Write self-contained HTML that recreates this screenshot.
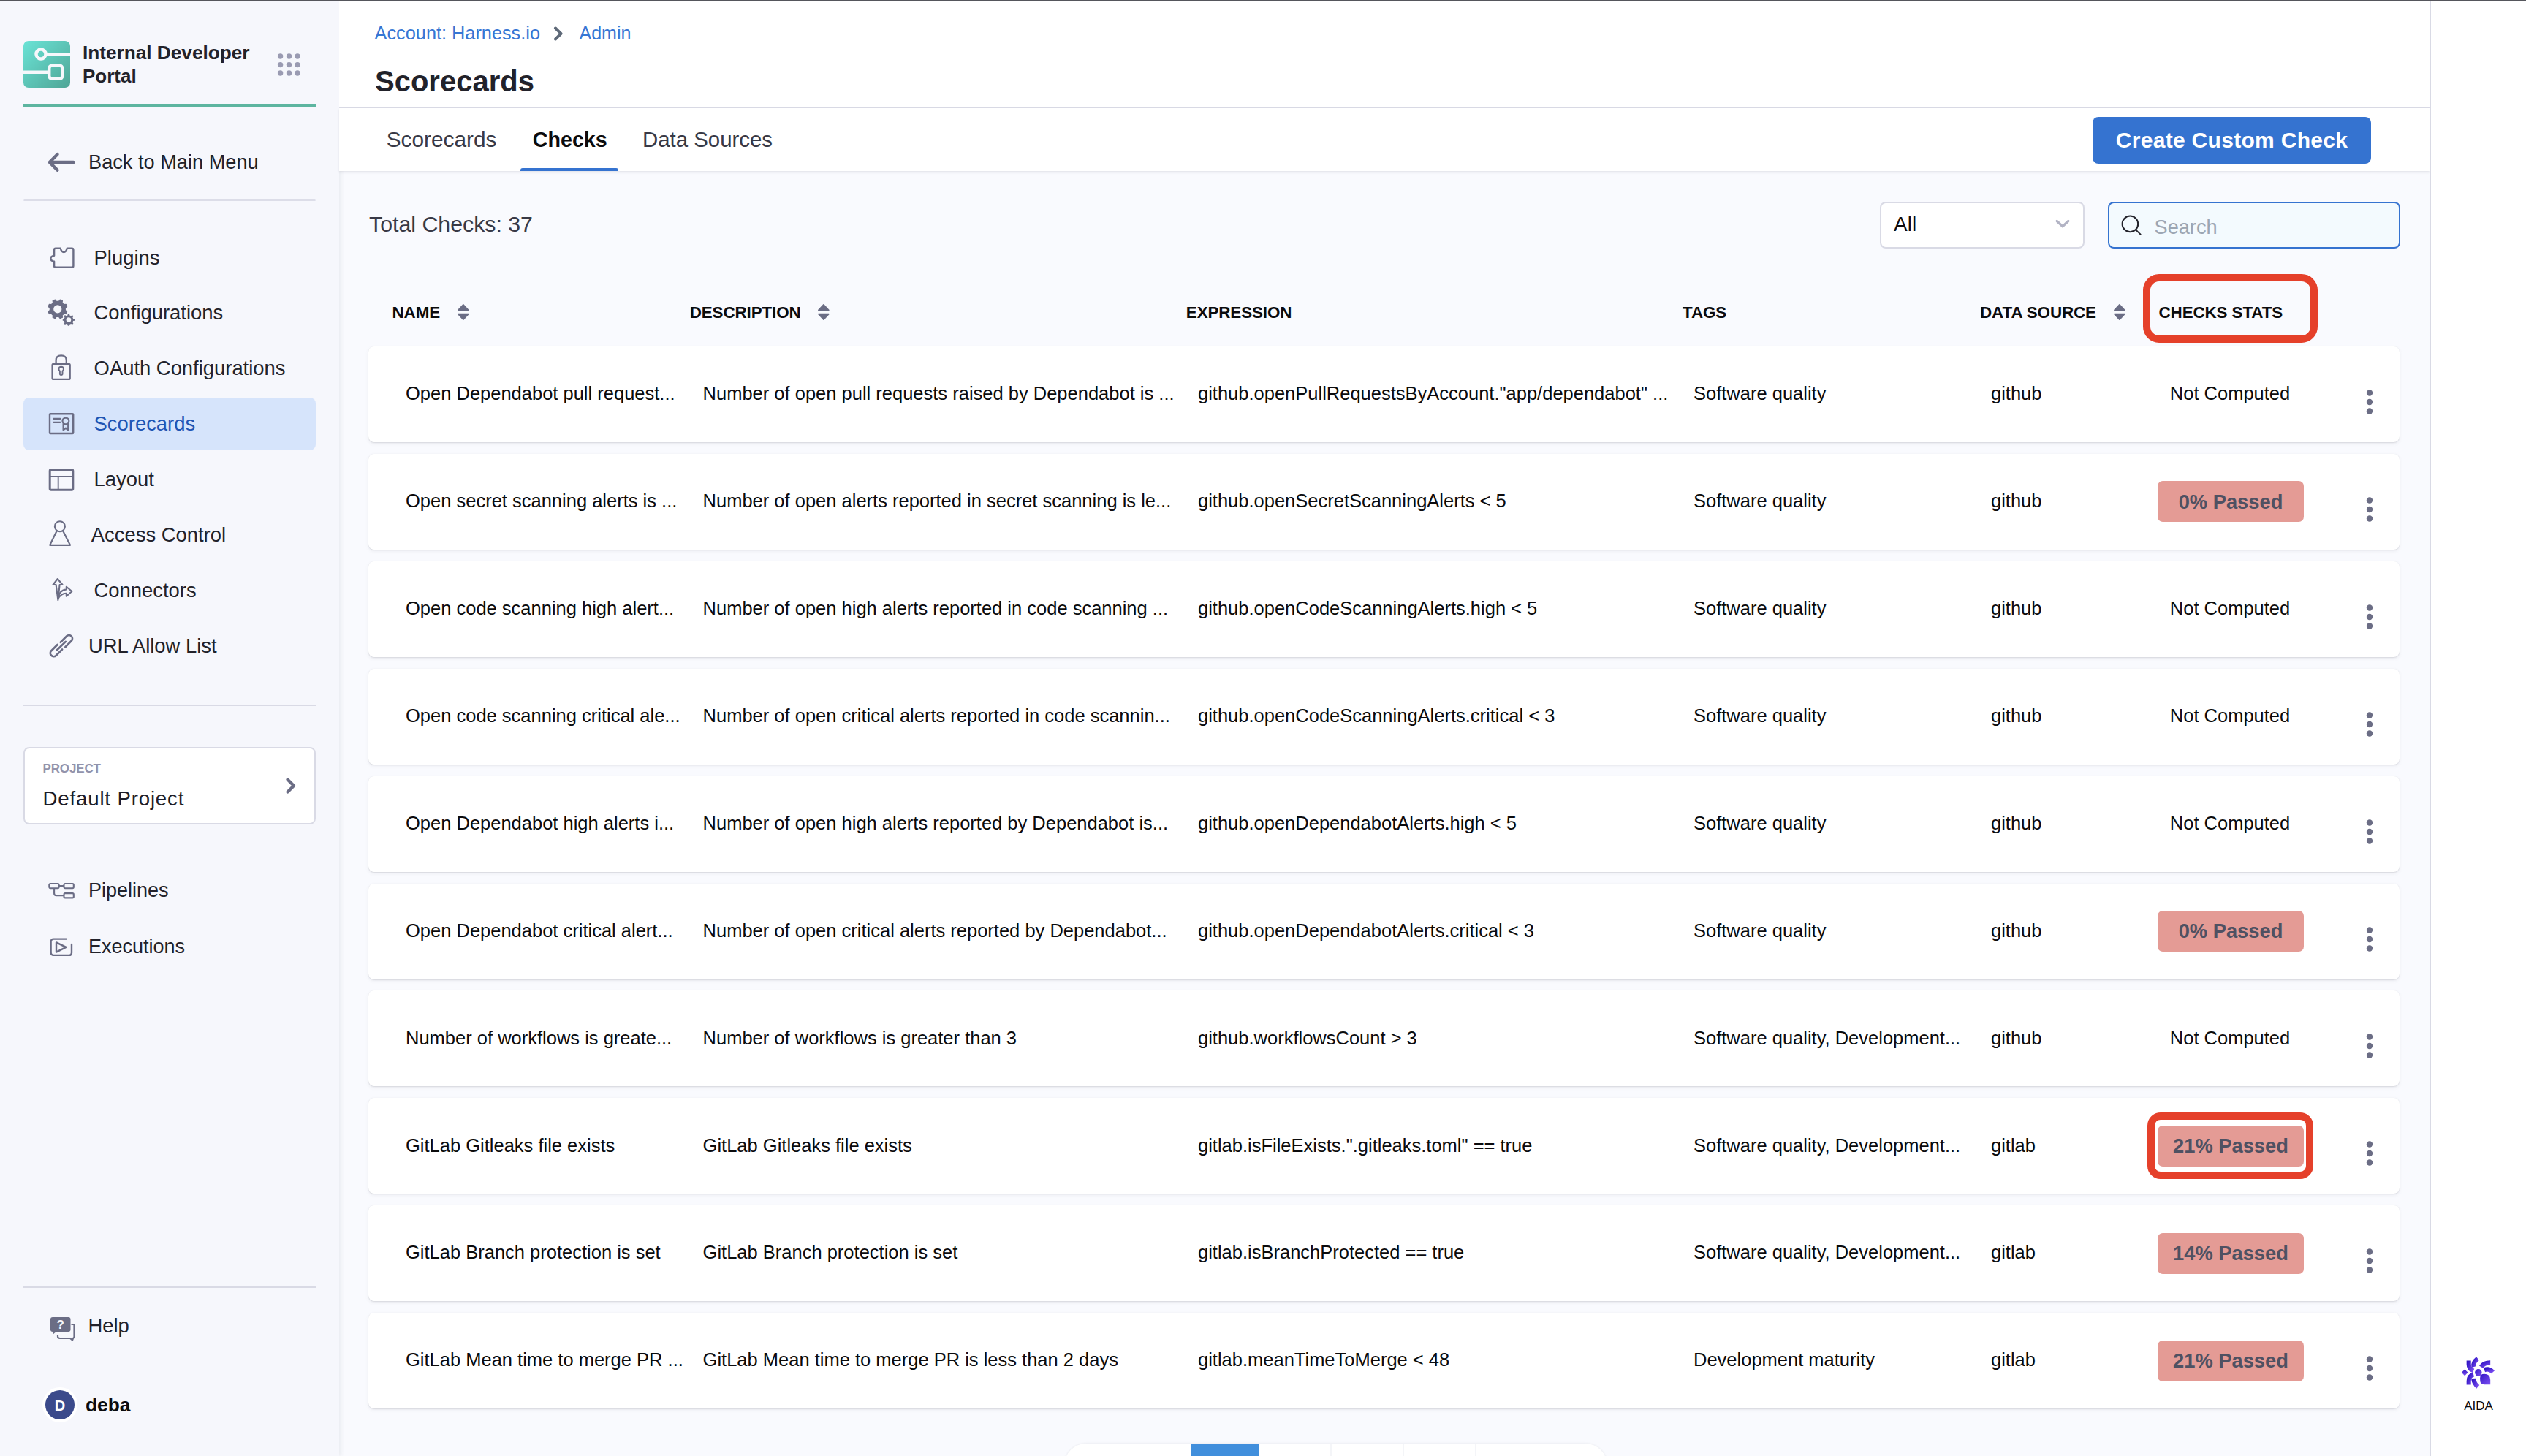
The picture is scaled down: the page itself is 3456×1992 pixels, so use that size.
<!DOCTYPE html>
<html><head><meta charset="utf-8"><title>Scorecards - Checks</title><style>
*{margin:0;padding:0;box-sizing:border-box}
html,body{width:3456px;height:1992px;overflow:hidden;background:#F9FAFE;font-family:"Liberation Sans",sans-serif}
.t{position:absolute;white-space:nowrap}
.abs{position:absolute}
svg{position:absolute;overflow:visible}
</style></head>
<body>
<div class="abs" style="left:0;top:0;width:3456px;height:2px;background:#55565C;z-index:50"></div><div class="abs" style="left:0;top:0;width:464px;height:1992px;background:#F6F7FC;box-shadow:3px 0 5px rgba(60,65,90,0.07)"></div><svg style="left:32px;top:56px" width="64" height="64" viewBox="0 0 64 64">
<defs><linearGradient id="lg" x1="0" y1="0" x2="1" y2="1"><stop offset="0" stop-color="#6AE3D6"/><stop offset="1" stop-color="#4FA596"/></linearGradient></defs>
<rect x="0" y="0" width="64" height="64" rx="7" fill="url(#lg)"/>
<rect x="30" y="16" width="34" height="4.5" fill="#F6F7FB"/>
<circle cx="24" cy="18" r="6.5" fill="none" stroke="#F6F7FB" stroke-width="4.5"/>
<rect x="0" y="40.5" width="34" height="4.5" fill="#F6F7FB"/>
<rect x="35.2" y="33.6" width="18.2" height="18.2" rx="4" fill="none" stroke="#F6F7FB" stroke-width="4.5"/>
</svg><div class="t" style="left:113px;top:58.8px;font-size:26.2px;line-height:26.2px;color:#22222A;font-weight:700;">Internal Developer</div>
<div class="t" style="left:113px;top:91.0px;font-size:26px;line-height:26px;color:#22222A;font-weight:700;">Portal</div>
<svg style="left:376px;top:70px" width="40" height="40"><circle cx="7.600000000000023" cy="7" r="3.7" fill="#9A9BB2"/><circle cx="19.5" cy="7" r="3.7" fill="#9A9BB2"/><circle cx="31" cy="7" r="3.7" fill="#9A9BB2"/><circle cx="7.600000000000023" cy="18.599999999999994" r="3.7" fill="#9A9BB2"/><circle cx="19.5" cy="18.599999999999994" r="3.7" fill="#9A9BB2"/><circle cx="31" cy="18.599999999999994" r="3.7" fill="#9A9BB2"/><circle cx="7.600000000000023" cy="30" r="3.7" fill="#9A9BB2"/><circle cx="19.5" cy="30" r="3.7" fill="#9A9BB2"/><circle cx="31" cy="30" r="3.7" fill="#9A9BB2"/></svg><div class="abs" style="left:32px;top:142px;width:400px;height:4px;background:#5DB5A0"></div><svg style="left:64px;top:206px" width="40" height="32" viewBox="0 0 40 32">
<path d="M36.5 16 H4.5 M14.5 5.2 L3.8 16 L14.5 26.8" fill="none" stroke="#6B6D85" stroke-width="4.4" stroke-linecap="round" stroke-linejoin="round"/></svg><div class="t" style="left:121px;top:208.0px;font-size:27.2px;line-height:27.2px;color:#22222A;font-weight:400;">Back to Main Menu</div>
<div class="abs" style="left:32px;top:272px;width:400px;height:3px;border-radius:2px;background:#DCDDE8"></div><div class="abs" style="left:32px;top:544px;width:400px;height:72px;border-radius:8px;background:#D6E4FB"></div><svg style="left:66px;top:336px" width="40" height="34" viewBox="0 0 40 34"><path d="M10 3.8 H16.8 Q18 9 21.25 9 Q24.5 9 25.7 3.8 H32.4 Q34.4 3.8 34.4 5.8 V27.7 Q34.4 29.7 32.4 29.7 H10 Q8.1 29.7 8.1 27.7 V21.7 Q3.4 21 3.4 17.7 Q3.4 14.4 8.1 13.7 V5.8 Q8.1 3.8 10 3.8 Z" fill="none" stroke="#6B6D85" stroke-width="2.4" stroke-linejoin="round"/></svg><div class="t" style="left:128.6px;top:338.6px;font-size:27.4px;line-height:27.4px;color:#22222A;font-weight:400;">Plugins</div>
<svg style="left:64px;top:408px" width="42" height="42" viewBox="0 0 42 42"><polygon points="25.27,16.56 27.56,18.28 26.21,21.53 23.38,21.13 21.03,23.48 21.43,26.31 18.18,27.66 16.46,25.37 13.14,25.37 11.42,27.66 8.17,26.31 8.57,23.48 6.22,21.13 3.39,21.53 2.04,18.28 4.33,16.56 4.33,13.24 2.04,11.52 3.39,8.27 6.22,8.67 8.57,6.32 8.17,3.49 11.42,2.14 13.14,4.43 16.46,4.43 18.18,2.14 21.43,3.49 21.03,6.32 23.38,8.67 26.21,8.27 27.56,11.52 25.27,13.24" fill="#6B6D85" stroke="#6B6D85" stroke-width="1.2" stroke-linejoin="round"/><circle cx="14.8" cy="14.9" r="5.6" fill="#F6F7FB"/><polygon points="36.12,28.11 38.03,28.51 38.03,30.69 36.12,31.09 35.36,32.94 36.42,34.57 34.87,36.12 33.24,35.06 31.39,35.82 30.99,37.73 28.81,37.73 28.41,35.82 26.56,35.06 24.93,36.12 23.38,34.57 24.44,32.94 23.68,31.09 21.77,30.69 21.77,28.51 23.68,28.11 24.44,26.26 23.38,24.63 24.93,23.08 26.56,24.14 28.41,23.38 28.81,21.47 30.99,21.47 31.39,23.38 33.24,24.14 34.87,23.08 36.42,24.63 35.36,26.26" fill="#6B6D85" stroke="#F6F7FB" stroke-width="2.6" stroke-linejoin="round" paint-order="stroke"/><circle cx="29.9" cy="29.6" r="3.3" fill="#F6F7FB"/></svg><div class="t" style="left:128.6px;top:414.4px;font-size:27.4px;line-height:27.4px;color:#22222A;font-weight:400;">Configurations</div>
<svg style="left:68px;top:483px" width="32" height="38" viewBox="0 0 32 38"><path d="M8.6 15 V10 Q8.6 3.4 15.7 3.4 Q22.8 3.4 22.8 10 V15" fill="none" stroke="#6B6D85" stroke-width="2.3"/><rect x="3.6" y="15" width="24.1" height="20.9" rx="1.5" fill="none" stroke="#6B6D85" stroke-width="2.3"/><path d="M15.7 18.8 Q18.9 18.8 18.9 22 Q18.9 23.6 17.5 24.6 V28.6 Q17.5 30 15.7 30 Q13.9 30 13.9 28.6 V24.6 Q12.5 23.6 12.5 22 Q12.5 18.8 15.7 18.8Z" fill="none" stroke="#6B6D85" stroke-width="1.9"/></svg><div class="t" style="left:128.6px;top:489.8px;font-size:27.4px;line-height:27.4px;color:#22222A;font-weight:400;">OAuth Configurations</div>
<svg style="left:65px;top:563px" width="38" height="34" viewBox="0 0 38 34"><rect x="3" y="3.2" width="32.2" height="26.8" rx="1" fill="none" stroke="#6B6D85" stroke-width="2.4"/><path d="M8.4 9.9 H17.3 M8.4 14.8 H17.3" stroke="#6B6D85" stroke-width="2.2" stroke-linecap="round"/><circle cx="24.9" cy="13" r="4.4" fill="none" stroke="#6B6D85" stroke-width="2.2"/><path d="M21.6 16.5 V25.3 L24.9 22.6 L28.2 25.3 V16.5" fill="none" stroke="#6B6D85" stroke-width="2.2" stroke-linejoin="round"/></svg><div class="t" style="left:128.6px;top:566.4px;font-size:27.4px;line-height:27.4px;color:#1F55B4;font-weight:400;">Scorecards</div>
<svg style="left:64px;top:639px" width="40" height="34" viewBox="0 0 40 34"><rect x="4.2" y="3.6" width="31.6" height="27.6" rx="1.8" fill="none" stroke="#6B6D85" stroke-width="3"/><path d="M4 13 H36 M15.7 13 V31" stroke="#6B6D85" stroke-width="1.9"/></svg><div class="t" style="left:128.6px;top:642.2px;font-size:27.4px;line-height:27.4px;color:#22222A;font-weight:400;">Layout</div>
<svg style="left:65px;top:710px" width="36" height="40" viewBox="0 0 36 40"><circle cx="16.9" cy="10.2" r="7" fill="none" stroke="#6B6D85" stroke-width="2.1"/><path d="M12.6 16.5 L3.2 35.8 H31 L21.2 16.5" fill="none" stroke="#6B6D85" stroke-width="2.2" stroke-linejoin="round"/></svg><div class="t" style="left:124.8px;top:718.4px;font-size:27.4px;line-height:27.4px;color:#22222A;font-weight:400;">Access Control</div>
<svg style="left:66px;top:788px" width="36" height="38" viewBox="0 0 36 38"><path d="M12.8 4 L19.5 12 H15.6 L13.4 33 L10.6 12 H6.5 Z" fill="none" stroke="#6B6D85" stroke-width="2.1" stroke-linejoin="round"/><path d="M24.8 14.8 L32.4 21 L24.8 27.7 V23.8 Q18 23.5 13.6 31 Q15 19 24.8 18.5 Z" fill="none" stroke="#6B6D85" stroke-width="2.1" stroke-linejoin="round"/></svg><div class="t" style="left:128.6px;top:794.3px;font-size:27.4px;line-height:27.4px;color:#22222A;font-weight:400;">Connectors</div>
<svg style="left:66px;top:866px" width="36" height="36" viewBox="0 0 36 36"><g fill="none" stroke="#6B6D85" stroke-width="2.7" stroke-linecap="round"><path d="M16.8 12.7 L25.25 4.25 A4.6 4.6 0 0 1 31.75 10.75 L23.3 19.2"/><path d="M19.05 22.45 L10.55 30.95 A4.6 4.6 0 0 1 4.05 24.45 L12.55 15.95"/><path d="M12 23.3 L23.8 11.9"/></g></svg><div class="t" style="left:121px;top:870.1px;font-size:27.4px;line-height:27.4px;color:#22222A;font-weight:400;">URL Allow List</div>
<div class="abs" style="left:32px;top:964px;width:400px;height:2px;background:#D9DAE5"></div><div class="abs" style="left:32px;top:1022px;width:400px;height:106px;border-radius:8px;background:#fff;border:2px solid #D9DAE5"></div><div class="t" style="left:58.5px;top:1043.0px;font-size:17px;line-height:17px;color:#9293AB;font-weight:700;letter-spacing:-0.15px;">PROJECT</div>
<div class="t" style="left:58.5px;top:1078.9px;font-size:27.6px;line-height:27.6px;color:#1C1C28;font-weight:400;letter-spacing:0.85px;">Default Project</div>
<svg style="left:388px;top:1062px" width="20" height="26" viewBox="0 0 20 26"><path d="M5.5 4.5 L14 13 L5.5 21.5" fill="none" stroke="#6B6D85" stroke-width="4.3" stroke-linecap="round" stroke-linejoin="round"/></svg><svg style="left:64px;top:1205px" width="40" height="28" viewBox="0 0 40 28"><g fill="none" stroke="#6B6D85" stroke-width="2.1"><rect x="3.3" y="4" width="13.3" height="6.2" rx="1.6"/><rect x="23.5" y="4" width="13.3" height="6.2" rx="1.6"/><rect x="23.5" y="17.1" width="13.3" height="6.3" rx="1.6"/><path d="M16.6 7.1 H23.5 M10.1 10.2 V17.3 Q10.1 20.3 13.1 20.3 H23.5"/></g></svg><div class="t" style="left:121px;top:1205.1px;font-size:27px;line-height:27px;color:#22222A;font-weight:400;">Pipelines</div>
<svg style="left:67px;top:1281px" width="34" height="30" viewBox="0 0 34 30"><g fill="none" stroke="#6B6D85" stroke-width="2.4" stroke-linecap="round" stroke-linejoin="round"><path d="M23.6 3.6 H6.6 Q2.6 3.6 2.6 7.6 V22 Q2.6 25.9 6.6 25.9 H27.5 Q31 25.9 31 22.4 V11"/><path d="M10 8.4 L23.4 14.9 L10 21.6 Z"/></g></svg><div class="t" style="left:121px;top:1281.9px;font-size:27px;line-height:27px;color:#22222A;font-weight:400;">Executions</div>
<div class="abs" style="left:32px;top:1760px;width:400px;height:2px;background:#D9DAE5"></div><svg style="left:67px;top:1800px" width="40" height="38" viewBox="0 0 40 38"><rect x="2" y="2" width="27.5" height="20" rx="3" fill="#6B6D85"/><path d="M5 21 L5 26 L11 21 Z" fill="#6B6D85"/><path d="M30.5 12 H34.5 V29.5 L33 31 L32 33.5 L29 31 H15 Q12 31 12 28.5 V26.5" fill="none" stroke="#6B6D85" stroke-width="2.2" stroke-linejoin="round"/><text x="15.7" y="18" font-family="Liberation Sans" font-weight="700" font-size="17" fill="#F6F7FB" text-anchor="middle">?</text></svg><div class="t" style="left:120.4px;top:1800.2px;font-size:27.4px;line-height:27.4px;color:#22222A;font-weight:400;">Help</div>
<div class="abs" style="left:58px;top:1898px;width:48px;height:48px;border-radius:50%;background:#fff"></div><div class="abs" style="left:62px;top:1902px;width:40px;height:40px;border-radius:50%;background:#3B4A8B"></div><div class="t" style="left:82px;transform:translateX(-50%);top:1913.1px;font-size:20px;line-height:20px;color:#fff;font-weight:700;">D</div>
<div class="t" style="left:117px;top:1908.7px;font-size:26.3px;line-height:26.3px;color:#0B0B0D;font-weight:700;">deba</div>
<div class="abs" style="left:464px;top:2px;width:2860px;height:146px;background:#fff;border-bottom:2px solid #D9DAE5"></div><div class="abs" style="left:464px;top:148px;width:2860px;height:86px;background:#fff;box-shadow:0 2px 3px rgba(40,41,61,0.10)"></div><div class="t" style="left:512.6px;top:32.6px;font-size:25.3px;line-height:25.3px;color:#3676D4;font-weight:400;">Account: Harness.io</div>
<svg style="left:755px;top:34px" width="20" height="24" viewBox="0 0 20 24"><path d="M5 4.5 L12.5 12 L5 19.5" fill="none" stroke="#5E6978" stroke-width="4" stroke-linecap="round" stroke-linejoin="round"/></svg><div class="t" style="left:792.5px;top:32.8px;font-size:25px;line-height:25px;color:#3676D4;font-weight:400;">Admin</div>
<div class="t" style="left:513px;top:90.8px;font-size:40px;line-height:40px;color:#22222A;font-weight:700;">Scorecards</div>
<div class="t" style="left:528.7px;top:175.8px;font-size:29.8px;line-height:29.8px;color:#383946;font-weight:400;">Scorecards</div>
<div class="t" style="left:728.7px;top:176.7px;font-size:28.7px;line-height:28.7px;color:#0B0B0D;font-weight:700;">Checks</div>
<div class="t" style="left:879px;top:176.1px;font-size:29.4px;line-height:29.4px;color:#383946;font-weight:400;">Data Sources</div>
<div class="abs" style="left:711.5px;top:230px;width:134px;height:4px;border-radius:3px 3px 0 0;background:#3573D0"></div><div class="abs" style="left:2863px;top:160px;width:381px;height:64px;border-radius:8px;background:#3573D0"></div><div class="t" style="left:3053.5px;transform:translateX(-50%);top:177.1px;font-size:30px;line-height:30px;color:#fff;font-weight:700;letter-spacing:0.3px;">Create Custom Check</div>
<div class="abs" style="left:3324px;top:2px;width:132px;height:1990px;background:#fff;border-left:2px solid #D9DAE5"></div><div class="t" style="left:505px;top:292.4px;font-size:30.3px;line-height:30.3px;color:#383946;font-weight:400;">Total Checks: 37</div>
<div class="abs" style="left:2572px;top:276px;width:280px;height:64px;border-radius:8px;background:#fff;border:2px solid #D9DAE5"></div><div class="t" style="left:2591px;top:293.3px;font-size:28px;line-height:28px;color:#0B0B0D;font-weight:400;">All</div>
<svg style="left:2810px;top:298px" width="24" height="16" viewBox="0 0 24 16"><path d="M4.2 4.5 L12 11.8 L19.8 4.5" fill="none" stroke="#B2B3C4" stroke-width="3.3" stroke-linecap="round" stroke-linejoin="round"/></svg><div class="abs" style="left:2884px;top:276px;width:400px;height:64px;border-radius:8px;background:#F3FAFE;border:2.5px solid #3573D0"></div><svg style="left:2900px;top:292px" width="32" height="32" viewBox="0 0 32 32"><circle cx="14.4" cy="14.4" r="10.8" fill="none" stroke="#22222A" stroke-width="2"/><path d="M22.4 22.6 L28.6 28.6" stroke="#22222A" stroke-width="2" stroke-linecap="round"/></svg><div class="t" style="left:2947.5px;top:296.5px;font-size:27.2px;line-height:27.2px;color:#9CA6B3;font-weight:400;">Search</div>
<div class="t" style="left:536.5px;top:416.8px;font-size:22.4px;line-height:22.4px;color:#0B0B0D;font-weight:700;letter-spacing:-0.1px;">NAME</div>
<svg style="left:624px;top:414px" width="18" height="26" viewBox="0 0 18 26"><path d="M2.9 10.4 L9.85 2.9 L16.8 10.4 Z M2.9 15.6 L9.85 23.1 L16.8 15.6 Z" fill="#6B6D85" stroke="#6B6D85" stroke-width="1.7" stroke-linejoin="round"/></svg><div class="t" style="left:943.7px;top:416.8px;font-size:22.4px;line-height:22.4px;color:#0B0B0D;font-weight:700;letter-spacing:-0.1px;">DESCRIPTION</div>
<svg style="left:1117px;top:414px" width="18" height="26" viewBox="0 0 18 26"><path d="M2.9 10.4 L9.85 2.9 L16.8 10.4 Z M2.9 15.6 L9.85 23.1 L16.8 15.6 Z" fill="#6B6D85" stroke="#6B6D85" stroke-width="1.7" stroke-linejoin="round"/></svg><div class="t" style="left:1622.8px;top:416.8px;font-size:22.4px;line-height:22.4px;color:#0B0B0D;font-weight:700;letter-spacing:-0.1px;">EXPRESSION</div>
<div class="t" style="left:2302px;top:416.8px;font-size:22.4px;line-height:22.4px;color:#0B0B0D;font-weight:700;letter-spacing:-0.1px;">TAGS</div>
<div class="t" style="left:2709px;top:416.8px;font-size:22.4px;line-height:22.4px;color:#0B0B0D;font-weight:700;letter-spacing:-0.1px;">DATA SOURCE</div>
<svg style="left:2889.7px;top:414px" width="18" height="26" viewBox="0 0 18 26"><path d="M2.9 10.4 L9.85 2.9 L16.8 10.4 Z M2.9 15.6 L9.85 23.1 L16.8 15.6 Z" fill="#6B6D85" stroke="#6B6D85" stroke-width="1.7" stroke-linejoin="round"/></svg><div class="t" style="left:2953.5px;top:416.8px;font-size:22.4px;line-height:22.4px;color:#0B0B0D;font-weight:700;letter-spacing:-0.1px;">CHECKS STATS</div>
<div class="abs" style="left:2932px;top:375px;width:239px;height:94px;border-radius:22px;border:10px solid #E5402A"></div><div class="abs" style="left:504px;top:474.0px;width:2779px;height:131px;border-radius:8px;background:#fff;box-shadow:0 0 1px rgba(40,41,61,0.08),0 1px 1.5px rgba(96,97,112,0.14),0 2px 5px rgba(96,97,112,0.09)"></div><div class="t" style="left:555px;top:526.2px;font-size:25.5px;line-height:25.5px;color:#0B0B0D;font-weight:400;">Open Dependabot pull request...</div>
<div class="t" style="left:961.6px;top:526.2px;font-size:25.5px;line-height:25.5px;color:#0B0B0D;font-weight:400;">Number of open pull requests raised by Dependabot is ...</div>
<div class="t" style="left:1639px;top:526.2px;font-size:25.5px;line-height:25.5px;color:#0B0B0D;font-weight:400;">github.openPullRequestsByAccount."app/dependabot" ...</div>
<div class="t" style="left:2317px;top:526.2px;font-size:25.5px;line-height:25.5px;color:#0B0B0D;font-weight:400;">Software quality</div>
<div class="t" style="left:2724px;top:526.2px;font-size:25.5px;line-height:25.5px;color:#0B0B0D;font-weight:400;">github</div>
<div class="t" style="left:3051px;transform:translateX(-50%);top:526.2px;font-size:25.5px;line-height:25.5px;color:#0B0B0D;font-weight:400;">Not Computed</div>
<svg style="left:3230px;top:528.0px" width="24" height="44"><circle cx="12" cy="9.5" r="4.2" fill="#6B6D85"/><circle cx="12" cy="22" r="4.2" fill="#6B6D85"/><circle cx="12" cy="34.5" r="4.2" fill="#6B6D85"/></svg><div class="abs" style="left:504px;top:620.9px;width:2779px;height:131px;border-radius:8px;background:#fff;box-shadow:0 0 1px rgba(40,41,61,0.08),0 1px 1.5px rgba(96,97,112,0.14),0 2px 5px rgba(96,97,112,0.09)"></div><div class="t" style="left:555px;top:673.1px;font-size:25.5px;line-height:25.5px;color:#0B0B0D;font-weight:400;">Open secret scanning alerts is ...</div>
<div class="t" style="left:961.6px;top:673.1px;font-size:25.5px;line-height:25.5px;color:#0B0B0D;font-weight:400;">Number of open alerts reported in secret scanning is le...</div>
<div class="t" style="left:1639px;top:673.1px;font-size:25.5px;line-height:25.5px;color:#0B0B0D;font-weight:400;">github.openSecretScanningAlerts &lt; 5</div>
<div class="t" style="left:2317px;top:673.1px;font-size:25.5px;line-height:25.5px;color:#0B0B0D;font-weight:400;">Software quality</div>
<div class="t" style="left:2724px;top:673.1px;font-size:25.5px;line-height:25.5px;color:#0B0B0D;font-weight:400;">github</div>
<div class="abs" style="left:2952px;top:658.4px;width:200px;height:56px;border-radius:7px;background:#E49B95"></div><div class="t" style="left:3052px;transform:translateX(-50%);top:672.8px;font-size:27.3px;line-height:27.3px;color:#4F5162;font-weight:700;">0% Passed</div>
<svg style="left:3230px;top:674.9px" width="24" height="44"><circle cx="12" cy="9.5" r="4.2" fill="#6B6D85"/><circle cx="12" cy="22" r="4.2" fill="#6B6D85"/><circle cx="12" cy="34.5" r="4.2" fill="#6B6D85"/></svg><div class="abs" style="left:504px;top:767.8px;width:2779px;height:131px;border-radius:8px;background:#fff;box-shadow:0 0 1px rgba(40,41,61,0.08),0 1px 1.5px rgba(96,97,112,0.14),0 2px 5px rgba(96,97,112,0.09)"></div><div class="t" style="left:555px;top:820.0px;font-size:25.5px;line-height:25.5px;color:#0B0B0D;font-weight:400;">Open code scanning high alert...</div>
<div class="t" style="left:961.6px;top:820.0px;font-size:25.5px;line-height:25.5px;color:#0B0B0D;font-weight:400;">Number of open high alerts reported in code scanning ...</div>
<div class="t" style="left:1639px;top:820.0px;font-size:25.5px;line-height:25.5px;color:#0B0B0D;font-weight:400;">github.openCodeScanningAlerts.high &lt; 5</div>
<div class="t" style="left:2317px;top:820.0px;font-size:25.5px;line-height:25.5px;color:#0B0B0D;font-weight:400;">Software quality</div>
<div class="t" style="left:2724px;top:820.0px;font-size:25.5px;line-height:25.5px;color:#0B0B0D;font-weight:400;">github</div>
<div class="t" style="left:3051px;transform:translateX(-50%);top:820.0px;font-size:25.5px;line-height:25.5px;color:#0B0B0D;font-weight:400;">Not Computed</div>
<svg style="left:3230px;top:821.8px" width="24" height="44"><circle cx="12" cy="9.5" r="4.2" fill="#6B6D85"/><circle cx="12" cy="22" r="4.2" fill="#6B6D85"/><circle cx="12" cy="34.5" r="4.2" fill="#6B6D85"/></svg><div class="abs" style="left:504px;top:914.7px;width:2779px;height:131px;border-radius:8px;background:#fff;box-shadow:0 0 1px rgba(40,41,61,0.08),0 1px 1.5px rgba(96,97,112,0.14),0 2px 5px rgba(96,97,112,0.09)"></div><div class="t" style="left:555px;top:966.9px;font-size:25.5px;line-height:25.5px;color:#0B0B0D;font-weight:400;">Open code scanning critical ale...</div>
<div class="t" style="left:961.6px;top:966.9px;font-size:25.5px;line-height:25.5px;color:#0B0B0D;font-weight:400;">Number of open critical alerts reported in code scannin...</div>
<div class="t" style="left:1639px;top:966.9px;font-size:25.5px;line-height:25.5px;color:#0B0B0D;font-weight:400;">github.openCodeScanningAlerts.critical &lt; 3</div>
<div class="t" style="left:2317px;top:966.9px;font-size:25.5px;line-height:25.5px;color:#0B0B0D;font-weight:400;">Software quality</div>
<div class="t" style="left:2724px;top:966.9px;font-size:25.5px;line-height:25.5px;color:#0B0B0D;font-weight:400;">github</div>
<div class="t" style="left:3051px;transform:translateX(-50%);top:966.9px;font-size:25.5px;line-height:25.5px;color:#0B0B0D;font-weight:400;">Not Computed</div>
<svg style="left:3230px;top:968.7px" width="24" height="44"><circle cx="12" cy="9.5" r="4.2" fill="#6B6D85"/><circle cx="12" cy="22" r="4.2" fill="#6B6D85"/><circle cx="12" cy="34.5" r="4.2" fill="#6B6D85"/></svg><div class="abs" style="left:504px;top:1061.6px;width:2779px;height:131px;border-radius:8px;background:#fff;box-shadow:0 0 1px rgba(40,41,61,0.08),0 1px 1.5px rgba(96,97,112,0.14),0 2px 5px rgba(96,97,112,0.09)"></div><div class="t" style="left:555px;top:1113.8px;font-size:25.5px;line-height:25.5px;color:#0B0B0D;font-weight:400;">Open Dependabot high alerts i...</div>
<div class="t" style="left:961.6px;top:1113.8px;font-size:25.5px;line-height:25.5px;color:#0B0B0D;font-weight:400;">Number of open high alerts reported by Dependabot is...</div>
<div class="t" style="left:1639px;top:1113.8px;font-size:25.5px;line-height:25.5px;color:#0B0B0D;font-weight:400;">github.openDependabotAlerts.high &lt; 5</div>
<div class="t" style="left:2317px;top:1113.8px;font-size:25.5px;line-height:25.5px;color:#0B0B0D;font-weight:400;">Software quality</div>
<div class="t" style="left:2724px;top:1113.8px;font-size:25.5px;line-height:25.5px;color:#0B0B0D;font-weight:400;">github</div>
<div class="t" style="left:3051px;transform:translateX(-50%);top:1113.8px;font-size:25.5px;line-height:25.5px;color:#0B0B0D;font-weight:400;">Not Computed</div>
<svg style="left:3230px;top:1115.6px" width="24" height="44"><circle cx="12" cy="9.5" r="4.2" fill="#6B6D85"/><circle cx="12" cy="22" r="4.2" fill="#6B6D85"/><circle cx="12" cy="34.5" r="4.2" fill="#6B6D85"/></svg><div class="abs" style="left:504px;top:1208.5px;width:2779px;height:131px;border-radius:8px;background:#fff;box-shadow:0 0 1px rgba(40,41,61,0.08),0 1px 1.5px rgba(96,97,112,0.14),0 2px 5px rgba(96,97,112,0.09)"></div><div class="t" style="left:555px;top:1260.7px;font-size:25.5px;line-height:25.5px;color:#0B0B0D;font-weight:400;">Open Dependabot critical alert...</div>
<div class="t" style="left:961.6px;top:1260.7px;font-size:25.5px;line-height:25.5px;color:#0B0B0D;font-weight:400;">Number of open critical alerts reported by Dependabot...</div>
<div class="t" style="left:1639px;top:1260.7px;font-size:25.5px;line-height:25.5px;color:#0B0B0D;font-weight:400;">github.openDependabotAlerts.critical &lt; 3</div>
<div class="t" style="left:2317px;top:1260.7px;font-size:25.5px;line-height:25.5px;color:#0B0B0D;font-weight:400;">Software quality</div>
<div class="t" style="left:2724px;top:1260.7px;font-size:25.5px;line-height:25.5px;color:#0B0B0D;font-weight:400;">github</div>
<div class="abs" style="left:2952px;top:1246.0px;width:200px;height:56px;border-radius:7px;background:#E49B95"></div><div class="t" style="left:3052px;transform:translateX(-50%);top:1260.4px;font-size:27.3px;line-height:27.3px;color:#4F5162;font-weight:700;">0% Passed</div>
<svg style="left:3230px;top:1262.5px" width="24" height="44"><circle cx="12" cy="9.5" r="4.2" fill="#6B6D85"/><circle cx="12" cy="22" r="4.2" fill="#6B6D85"/><circle cx="12" cy="34.5" r="4.2" fill="#6B6D85"/></svg><div class="abs" style="left:504px;top:1355.4px;width:2779px;height:131px;border-radius:8px;background:#fff;box-shadow:0 0 1px rgba(40,41,61,0.08),0 1px 1.5px rgba(96,97,112,0.14),0 2px 5px rgba(96,97,112,0.09)"></div><div class="t" style="left:555px;top:1407.6px;font-size:25.5px;line-height:25.5px;color:#0B0B0D;font-weight:400;">Number of workflows is greate...</div>
<div class="t" style="left:961.6px;top:1407.6px;font-size:25.5px;line-height:25.5px;color:#0B0B0D;font-weight:400;">Number of workflows is greater than 3</div>
<div class="t" style="left:1639px;top:1407.6px;font-size:25.5px;line-height:25.5px;color:#0B0B0D;font-weight:400;">github.workflowsCount &gt; 3</div>
<div class="t" style="left:2317px;top:1407.6px;font-size:25.5px;line-height:25.5px;color:#0B0B0D;font-weight:400;">Software quality, Development...</div>
<div class="t" style="left:2724px;top:1407.6px;font-size:25.5px;line-height:25.5px;color:#0B0B0D;font-weight:400;">github</div>
<div class="t" style="left:3051px;transform:translateX(-50%);top:1407.6px;font-size:25.5px;line-height:25.5px;color:#0B0B0D;font-weight:400;">Not Computed</div>
<svg style="left:3230px;top:1409.4px" width="24" height="44"><circle cx="12" cy="9.5" r="4.2" fill="#6B6D85"/><circle cx="12" cy="22" r="4.2" fill="#6B6D85"/><circle cx="12" cy="34.5" r="4.2" fill="#6B6D85"/></svg><div class="abs" style="left:504px;top:1502.3px;width:2779px;height:131px;border-radius:8px;background:#fff;box-shadow:0 0 1px rgba(40,41,61,0.08),0 1px 1.5px rgba(96,97,112,0.14),0 2px 5px rgba(96,97,112,0.09)"></div><div class="t" style="left:555px;top:1554.5px;font-size:25.5px;line-height:25.5px;color:#0B0B0D;font-weight:400;">GitLab Gitleaks file exists</div>
<div class="t" style="left:961.6px;top:1554.5px;font-size:25.5px;line-height:25.5px;color:#0B0B0D;font-weight:400;">GitLab Gitleaks file exists</div>
<div class="t" style="left:1639px;top:1554.5px;font-size:25.5px;line-height:25.5px;color:#0B0B0D;font-weight:400;">gitlab.isFileExists.".gitleaks.toml" == true</div>
<div class="t" style="left:2317px;top:1554.5px;font-size:25.5px;line-height:25.5px;color:#0B0B0D;font-weight:400;">Software quality, Development...</div>
<div class="t" style="left:2724px;top:1554.5px;font-size:25.5px;line-height:25.5px;color:#0B0B0D;font-weight:400;">gitlab</div>
<div class="abs" style="left:2952px;top:1539.8px;width:200px;height:56px;border-radius:7px;background:#E49B95"></div><div class="t" style="left:3052px;transform:translateX(-50%);top:1554.2px;font-size:27.3px;line-height:27.3px;color:#4F5162;font-weight:700;">21% Passed</div>
<svg style="left:3230px;top:1556.3px" width="24" height="44"><circle cx="12" cy="9.5" r="4.2" fill="#6B6D85"/><circle cx="12" cy="22" r="4.2" fill="#6B6D85"/><circle cx="12" cy="34.5" r="4.2" fill="#6B6D85"/></svg><div class="abs" style="left:504px;top:1649.2px;width:2779px;height:131px;border-radius:8px;background:#fff;box-shadow:0 0 1px rgba(40,41,61,0.08),0 1px 1.5px rgba(96,97,112,0.14),0 2px 5px rgba(96,97,112,0.09)"></div><div class="t" style="left:555px;top:1701.4px;font-size:25.5px;line-height:25.5px;color:#0B0B0D;font-weight:400;">GitLab Branch protection is set</div>
<div class="t" style="left:961.6px;top:1701.4px;font-size:25.5px;line-height:25.5px;color:#0B0B0D;font-weight:400;">GitLab Branch protection is set</div>
<div class="t" style="left:1639px;top:1701.4px;font-size:25.5px;line-height:25.5px;color:#0B0B0D;font-weight:400;">gitlab.isBranchProtected == true</div>
<div class="t" style="left:2317px;top:1701.4px;font-size:25.5px;line-height:25.5px;color:#0B0B0D;font-weight:400;">Software quality, Development...</div>
<div class="t" style="left:2724px;top:1701.4px;font-size:25.5px;line-height:25.5px;color:#0B0B0D;font-weight:400;">gitlab</div>
<div class="abs" style="left:2952px;top:1686.7px;width:200px;height:56px;border-radius:7px;background:#E49B95"></div><div class="t" style="left:3052px;transform:translateX(-50%);top:1701.1px;font-size:27.3px;line-height:27.3px;color:#4F5162;font-weight:700;">14% Passed</div>
<svg style="left:3230px;top:1703.2px" width="24" height="44"><circle cx="12" cy="9.5" r="4.2" fill="#6B6D85"/><circle cx="12" cy="22" r="4.2" fill="#6B6D85"/><circle cx="12" cy="34.5" r="4.2" fill="#6B6D85"/></svg><div class="abs" style="left:504px;top:1796.1px;width:2779px;height:131px;border-radius:8px;background:#fff;box-shadow:0 0 1px rgba(40,41,61,0.08),0 1px 1.5px rgba(96,97,112,0.14),0 2px 5px rgba(96,97,112,0.09)"></div><div class="t" style="left:555px;top:1848.3px;font-size:25.5px;line-height:25.5px;color:#0B0B0D;font-weight:400;">GitLab Mean time to merge PR ...</div>
<div class="t" style="left:961.6px;top:1848.3px;font-size:25.5px;line-height:25.5px;color:#0B0B0D;font-weight:400;">GitLab Mean time to merge PR is less than 2 days</div>
<div class="t" style="left:1639px;top:1848.3px;font-size:25.5px;line-height:25.5px;color:#0B0B0D;font-weight:400;">gitlab.meanTimeToMerge &lt; 48</div>
<div class="t" style="left:2317px;top:1848.3px;font-size:25.5px;line-height:25.5px;color:#0B0B0D;font-weight:400;">Development maturity</div>
<div class="t" style="left:2724px;top:1848.3px;font-size:25.5px;line-height:25.5px;color:#0B0B0D;font-weight:400;">gitlab</div>
<div class="abs" style="left:2952px;top:1833.6px;width:200px;height:56px;border-radius:7px;background:#E49B95"></div><div class="t" style="left:3052px;transform:translateX(-50%);top:1848.0px;font-size:27.3px;line-height:27.3px;color:#4F5162;font-weight:700;">21% Passed</div>
<svg style="left:3230px;top:1850.1px" width="24" height="44"><circle cx="12" cy="9.5" r="4.2" fill="#6B6D85"/><circle cx="12" cy="22" r="4.2" fill="#6B6D85"/><circle cx="12" cy="34.5" r="4.2" fill="#6B6D85"/></svg><div class="abs" style="left:2938px;top:1522px;width:227px;height:91px;border-radius:18px;border:10px solid #E5402A"></div><div class="abs" style="left:1456px;top:1975px;width:743px;height:60px;border-radius:30px;background:#fff;box-shadow:0 0 3px rgba(40,41,61,0.10)"></div><div class="abs" style="left:1629px;top:1975px;width:94px;height:40px;background:#418FDC"></div><div class="abs" style="left:1820px;top:1975px;width:2px;height:20px;background:#F4F5F8"></div><div class="abs" style="left:1919px;top:1975px;width:2px;height:20px;background:#F4F5F8"></div><div class="abs" style="left:2018px;top:1975px;width:2px;height:20px;background:#F4F5F8"></div><svg style="left:3368px;top:1855px" width="46" height="46" viewBox="0 0 64 64">
<defs><linearGradient id="ag" x1="0" y1="0" x2="1" y2="1"><stop offset="0" stop-color="#3417C6"/><stop offset="1" stop-color="#7D50F2"/></linearGradient></defs>
<g fill="none" stroke="url(#ag)" stroke-width="8.5" stroke-linecap="butt">
<path d="M13.5 9 V16 Q13.5 25 22.5 28.5"/>
<path d="M23 21 Q20.5 13 30.5 5"/>
<path d="M37 21 Q42 13 54.5 13"/>
<path d="M43 27 Q52 23 59.5 31"/>
<path d="M13.5 55 V48 Q13.5 38 22.5 35.5"/>
<path d="M22.5 43 Q23 52 31 59"/>
</g>
<path d="M35 42 Q35 34.5 43 34.5 Q54.5 34.5 54.5 46 V54.5 H43 Q35 54.5 35 46 Z" fill="url(#ag)"/>
<rect x="1.5" y="27.5" width="8.5" height="8.5" transform="rotate(45 5.8 31.8)" fill="url(#ag)"/>
<circle cx="31.8" cy="31.8" r="6.6" fill="url(#ag)"/>
</svg><div class="t" style="left:3391px;transform:translateX(-50%);top:1914.6px;font-size:17px;line-height:17px;color:#0B0B0D;font-weight:400;">AIDA</div>

</body></html>
